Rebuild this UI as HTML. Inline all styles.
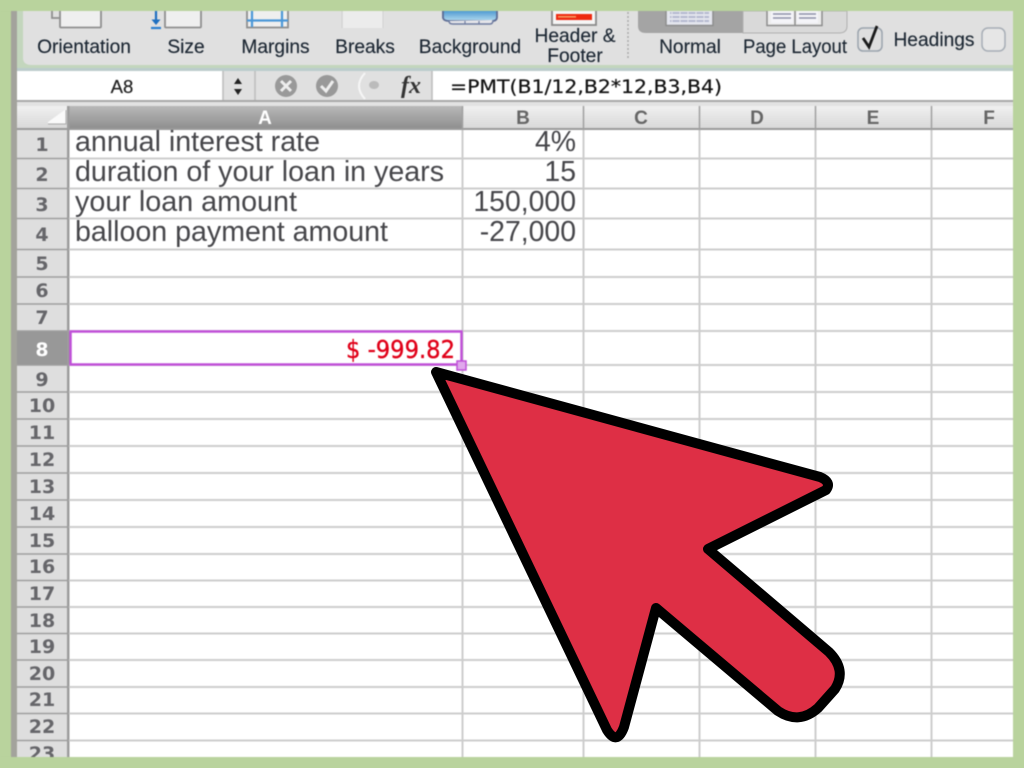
<!DOCTYPE html>
<html><head><meta charset="utf-8">
<style>
html,body{margin:0;padding:0;width:1024px;height:768px;overflow:hidden;background:#b9d39d}
#s{position:absolute;left:0;top:0;width:1024px;height:768px;overflow:hidden}
text{font-family:"Liberation Sans",sans-serif}
.t{font-size:19.2px;fill:#1c2733;text-anchor:middle;stroke:#1c2733;stroke-width:.15px}
.c{font-size:28.4px;fill:#46464a}
.r{text-anchor:end}
.h{font-size:19px;font-weight:bold;fill:#66666a;text-anchor:middle;font-family:"DejaVu Sans",sans-serif}
.ch{font-size:19px;font-weight:bold;fill:#666;text-anchor:middle}
</style></head><body>
<svg id="s" width="1024" height="768" viewBox="0 0 1024 768" xmlns="http://www.w3.org/2000/svg">
<defs>
<linearGradient id="hd" x1="0" y1="0" x2="0" y2="1"><stop offset="0" stop-color="#f0f0f0"/><stop offset="1" stop-color="#d8d8d8"/></linearGradient>
<linearGradient id="ha" x1="0" y1="0" x2="0" y2="1"><stop offset="0" stop-color="#b8b8b8"/><stop offset="1" stop-color="#8e8e8e"/></linearGradient>
<linearGradient id="bl" x1="0" y1="0" x2="0" y2="1"><stop offset="0" stop-color="#4f9ad2"/><stop offset="1" stop-color="#a8d4ec"/></linearGradient>
</defs>
<rect width="1024" height="768" fill="#b9d39d"/>
<g style="filter:blur(.6px)">
<!-- window -->
<rect x="11" y="11" width="1002" height="746" fill="#fff"/>
<rect x="11" y="11" width="6" height="746" fill="#a3a39c"/>
<!-- ribbon -->
<rect x="17" y="11" width="996" height="60" fill="#e0e0e0"/>
<path d="M23 11V58Q23 65 32 65H1013V68H17V11Z" fill="#c3d6bd"/>
<rect x="17" y="68" width="996" height="3" fill="#bcc"/>
<!-- icons -->
<g fill="#efefef" stroke="#8f8f8f" stroke-width="1.800">
<path d="M52 5V18H60" fill="none"/><rect x="60" y="3" width="41" height="24.500" rx="1"/>
<rect x="165" y="3" width="36" height="24.500" rx="1"/>
<rect x="247" y="3" width="41" height="24.500"/>
</g>
<path d="M156 11V23" stroke="#1e6fc0" stroke-width="2.200" fill="none"/>
<path d="M151.500 19.500L156 25L160.500 19.500Z" fill="#1e6fc0"/>
<path d="M151 28H161" stroke="#2a80d0" stroke-width="2.200"/>
<path d="M252 11V27M282 11V27M247 20.500H288" stroke="#4b98d8" stroke-width="2.200" fill="none"/>
<rect x="343" y="11" width="40" height="17" fill="#ececec"/>
<path d="M342 11V28M383 11V28" stroke="#d0d0d0"/>
<path d="M442 11V18Q443 20 447 20H494Q497 20 497 17V11Z" fill="url(#bl)"/>
<path d="M443 11V18Q444 21 449 21H492Q497 21 497 17V11" fill="none" stroke="#5d6c94" stroke-width="1.800"/>
<path d="M449 21Q449 24 453 24H490Q493 24 493 20" fill="#e6e6ea" stroke="#6f7ca0" stroke-width="1.500"/>
<path d="M465 21V24M479 21V24" stroke="#6f7ca0" stroke-width="1.200"/>
<rect x="552" y="3" width="44" height="22" fill="#f5f5f5" stroke="#8a8a8a" stroke-width="1.800"/>
<rect x="556" y="14" width="36" height="6" fill="#ee2a10"/>
<rect x="558" y="16" width="18" height="1.600" fill="#f69a60"/>
<path d="M628 12V60" stroke="#aaa" stroke-width="1.500" stroke-dasharray="2 2"/>
<path d="M638 11V26Q638 33 646 33H743V11Z" fill="#a4a4a4"/>
<path d="M743 11V33H839Q847 33 847 26V11Z" fill="#d9d9d9" stroke="#b0b0b0"/>
<rect x="666" y="4" width="47" height="21.500" fill="#e4e6ee" stroke="#8d8d8d" stroke-width="1.500"/>
<rect x="767" y="4" width="55" height="21.500" fill="#ededed" stroke="#8d8d8d" stroke-width="1.500"/>
<path d="M670 13H709M670 17H709M670 21H709" stroke="#b4b9cf" stroke-width="2"/>
<path d="M672 11V23M680 11V23M688 11V23M696 11V23M704 11V23" stroke="#e4e6ee" stroke-width="1"/>
<rect x="771" y="11" width="22" height="12" fill="#f4f4f8"/><rect x="797" y="11" width="21" height="12" fill="#f4f4f8"/>
<path d="M773 14H791M799 14H816M773 18H791M799 18H816" stroke="#8d90a8" stroke-width="1.500"/>
<path d="M795 11V25" stroke="#8d8d8d" stroke-width="1.500"/>
<text x="84" y="53" class="t">Orientation</text>
<text x="186" y="53" class="t">Size</text>
<text x="275.500" y="53" class="t">Margins</text>
<text x="365" y="53" class="t">Breaks</text>
<text x="470" y="53" class="t">Background</text>
<text x="575" y="42" class="t">Header &amp;</text>
<text x="575" y="62" class="t">Footer</text>
<text x="690" y="53" class="t">Normal</text>
<text x="795" y="53" class="t" textLength="104" lengthAdjust="spacingAndGlyphs">Page Layout</text>
<rect x="858" y="28" width="24" height="23" rx="5" fill="#dedede" stroke="#9aa3ad" stroke-width="1.500"/>
<path d="M863 38L869 47L877 26" fill="none" stroke="#1a1a1a" stroke-width="2.800"/>
<text x="934" y="46" class="t">Headings</text>
<rect x="982" y="28" width="23" height="23" rx="6" fill="#e6e6e6" stroke="#a6adb5" stroke-width="1.500"/>
<!-- formula bar -->
<rect x="17" y="71" width="996" height="29" fill="#fff"/>
<rect x="17" y="100" width="996" height="6" fill="#e2e2e2"/>
<rect x="17" y="100" width="996" height="2" fill="#a8a8a8"/>
<rect x="223" y="71" width="209" height="29" fill="#e0e0e0"/>
<path d="M223 71V100M255 71V100M432 71V100" stroke="#bcbcbc" stroke-width="1.500"/>
<text x="122" y="93" font-size="18.500" fill="#222" text-anchor="middle" stroke="#222" stroke-width=".2">A8</text>
<path d="M238 78L242 84H234ZM238 95L242 89H234Z" fill="#222"/>
<circle cx="286" cy="86" r="11" fill="#999"/>
<path d="M281 81L291 91M291 81L281 91" stroke="#eee" stroke-width="3"/>
<circle cx="327" cy="86" r="11" fill="#999"/>
<path d="M321 86L326 91L333 81" stroke="#eee" stroke-width="3" fill="none"/>
<path d="M365 73Q353 86 365 99" fill="none" stroke="#f6f6f6" stroke-width="2"/>
<ellipse cx="374" cy="85" rx="5" ry="4" fill="#bbb"/>
<text x="401" y="93" font-size="24" font-style="italic" font-weight="bold" fill="#333" style="font-family:'Liberation Serif',serif">fx</text>
<text x="450" y="93" font-size="19" fill="#111" stroke="#111" stroke-width=".2" textLength="272" lengthAdjust="spacingAndGlyphs" style="font-family:'DejaVu Sans',sans-serif">=PMT(B1/12,B2*12,B3,B4)</text>
<!-- column headers -->
<rect x="17" y="106" width="996" height="23" fill="url(#hd)"/>
<rect x="69" y="106" width="393" height="23" fill="url(#ha)"/>
<rect x="17" y="128" width="996" height="2" fill="#9a9a9a"/>
<path d="M48 122L66 109V124H48Z" fill="#fafafa"/>
<path d="M48 124H66V110" stroke="#aaa" fill="none"/>
<path d="M68.500 106V130M462.500 106V130M583.500 106V130M699.500 106V130M815.500 106V130M931.500 106V130" stroke="#a0a0a0" stroke-width="1.500"/>
<text x="265" y="124" class="ch" style="fill:#fff">A</text>
<text x="523" y="124" class="ch">B</text>
<text x="641" y="124" class="ch">C</text>
<text x="757" y="124" class="ch">D</text>
<text x="873" y="124" class="ch">E</text>
<text x="989" y="124" class="ch">F</text>
<!-- row header -->
<rect x="17" y="130" width="52" height="627" fill="#dedede"/>
<rect x="17" y="331" width="52" height="34" fill="#989898"/>
<rect x="67" y="106" width="2.500" height="651" fill="#9c9c9c"/>
<g stroke="#cdcdcd" stroke-width="2" fill="none">
<path d="M69 158.500H1013M69 188.500H1013M69 218.500H1013M69 249.500H1013M69 277H1013M69 304H1013M69 331H1013M69 365H1013M69 392H1013M69 419H1013M69 446H1013M69 473H1013M69 500H1013M69 527H1013M69 554H1013M69 580.500H1013M69 607H1013M69 633.500H1013M69 660H1013M69 687H1013M69 713.500H1013M69 740.500H1013"/>
<path d="M462.500 130V757M583.500 130V757M699.500 130V757M815.500 130V757M931.500 130V757"/>
</g>
<g stroke="#9e9e9e" stroke-width="1.500" fill="none">
<path d="M17 158.500H68M17 188.500H68M17 218.500H68M17 249.500H68M17 277H68M17 304H68M17 331H68M17 365H68M17 392H68M17 419H68M17 446H68M17 473H68M17 500H68M17 527H68M17 554H68M17 580.500H68M17 607H68M17 633.500H68M17 660H68M17 687H68M17 713.500H68M17 740.500H68"/>
</g>
<g>
<text x="42" y="151" class="h">1</text><text x="42" y="181" class="h">2</text><text x="42" y="211" class="h">3</text><text x="42" y="241" class="h">4</text>
<text x="42" y="270" class="h">5</text><text x="42" y="297" class="h">6</text><text x="42" y="324" class="h">7</text>
<text x="42" y="356" class="h" style="fill:#fff">8</text>
<text x="42" y="386" class="h">9</text><text x="42" y="412" class="h">10</text><text x="42" y="439" class="h">11</text><text x="42" y="466" class="h">12</text><text x="42" y="493" class="h">13</text><text x="42" y="520" class="h">14</text><text x="42" y="547" class="h">15</text><text x="42" y="573" class="h">16</text><text x="42" y="600" class="h">17</text><text x="42" y="627" class="h">18</text><text x="42" y="653" class="h">19</text><text x="42" y="680" class="h">20</text><text x="42" y="706" class="h">21</text><text x="42" y="733" class="h">22</text><text x="42" y="760" class="h">23</text>
</g>
<!-- cells -->
<text x="75" y="151" class="c" textLength="245" lengthAdjust="spacingAndGlyphs">annual interest rate</text>
<text x="75" y="181" class="c" textLength="369" lengthAdjust="spacingAndGlyphs">duration of your loan in years</text>
<text x="75" y="211" class="c" textLength="222" lengthAdjust="spacingAndGlyphs">your loan amount</text>
<text x="75" y="241" class="c" textLength="313" lengthAdjust="spacingAndGlyphs">balloon payment amount</text>
<text x="576" y="151" class="c r">4%</text>
<text x="576" y="181" class="c r">15</text>
<text x="576" y="211" class="c r">150,000</text>
<text x="576" y="241" class="c r">-27,000</text>
<!-- selection -->
<rect x="70.500" y="331.500" width="391" height="33" fill="#fff" stroke="#c050d8" stroke-width="2.500"/>
<text x="346" y="358" font-size="25" fill="#e00018" stroke="#e00018" stroke-width=".35" style="font-family:'DejaVu Sans',sans-serif" textLength="109" lengthAdjust="spacingAndGlyphs">$ -999.82</text>
<rect x="457" y="361" width="9" height="9" fill="#e0a8ec" stroke="#c050d8" stroke-width="1.500"/>
<!-- right/bottom clipping -->
<rect x="1013" y="0" width="11" height="768" fill="#b9d39d"/>
<rect x="0" y="757" width="1024" height="11" fill="#b9d39d"/>
<rect x="0" y="0" width="1024" height="11" fill="#b9d39d"/>
</g>
<!-- arrow -->
<path d="M436 372L820 477Q832 482 826 490L708 549L829 652Q847 670 835 689L818 708Q799 725 778 711L656 608L624 727Q617 746 607 730Z" fill="#de2f45" stroke="#000" stroke-width="10" stroke-linejoin="round"/>
</svg>
</body></html>
